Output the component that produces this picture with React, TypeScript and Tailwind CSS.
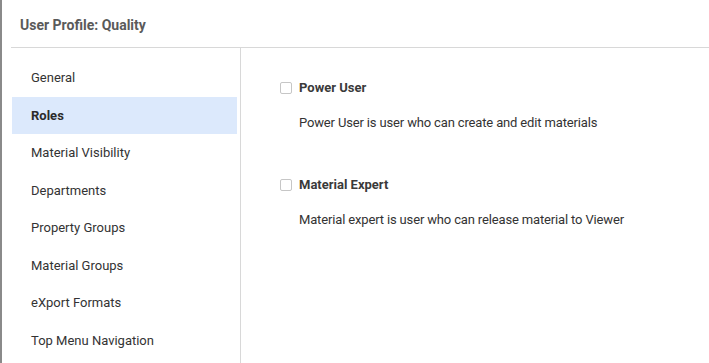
// Widok profilu użytkownika z listą sekcji i rolami
import React from 'react';

const sections = [
  'General',
  'Roles',
  'Material Visibility',
  'Departments',
  'Property Groups',
  'Material Groups',
  'eXport Formats',
  'Top Menu Navigation',
];

const roles = [
  { name: 'Power User', description: 'Power User is user who can create and edit materials' },
  { name: 'Material Expert', description: 'Material expert is user who can release material to Viewer' },
];

const RoleItem: React.FC<{ name: string; description: string }> = ({ name, description }) => (
  <div className="mb-[40px]">
    <label className="flex items-center h-[22px]">
      <span className="w-[12px] h-[12px] border border-[#c6c6c6] rounded-[2px] bg-white mr-[7px]" />
      <span className="font-bold text-[#3a3a3a]">{name}</span>
    </label>
    <p className="mt-[13px] ml-[19px] h-[22px] leading-[22px] tracking-[-0.15px] text-[#333333]">{description}</p>
  </div>
);

export default function App() {
  return (
    <div
      className="w-[709px] h-[363px] bg-white border-l-2 border-[#8a8a8a] flex flex-col text-[13px] overflow-hidden"
      style={{ fontFamily: 'Roboto, "Noto Sans", sans-serif' }}
    >
      {/* Nagłówek */}
      <div className="h-[48px] flex items-center pt-[3px] ml-[9px] border-b border-[#d8d8d8]">
        <span className="ml-[9px] text-[14px] font-bold text-[#5a5a5a]">User Profile: Quality</span>
      </div>

      <div className="flex flex-1">
        {/* Menu boczne */}
        <div className="w-[239px] border-r border-[#d8d8d8] pt-[11px] pl-[10px] pr-[3px]">
          {sections.map((s) => (
            <div
              key={s}
              className={
                s === 'Roles'
                  ? 'h-[37.5px] flex items-center pl-[19px] bg-[#dce9fc] font-bold text-[#2b2b2b]'
                  : 'h-[37.5px] flex items-center pl-[19px] text-[#333333]'
              }
            >
              {s}
            </div>
          ))}
        </div>

        {/* Role */}
        <div className="flex-1 pt-[29px] pl-[39px]">
          {roles.map((r) => (
            <RoleItem key={r.name} name={r.name} description={r.description} />
          ))}
        </div>
      </div>
    </div>
  );
}
